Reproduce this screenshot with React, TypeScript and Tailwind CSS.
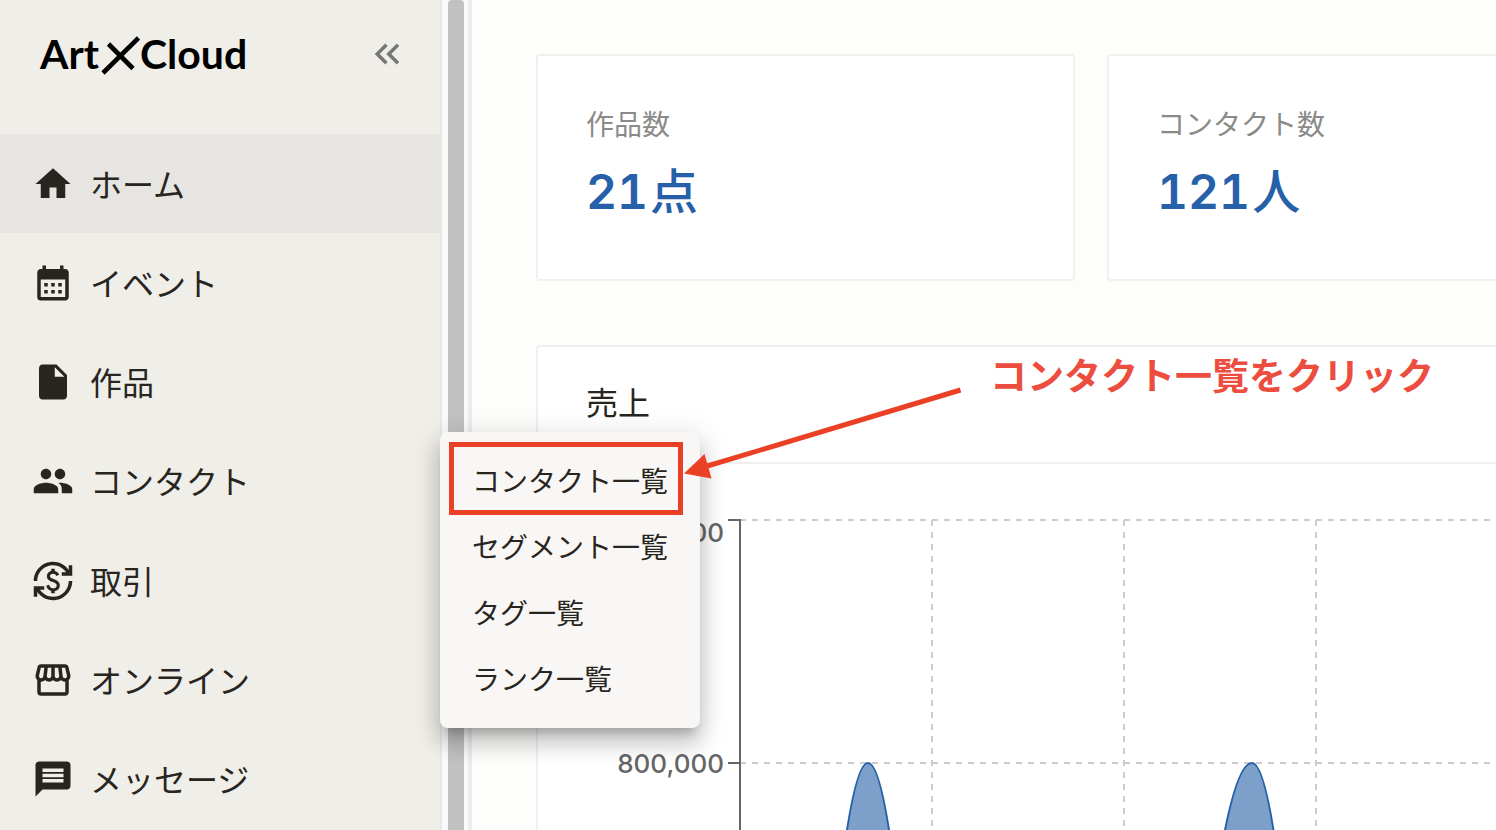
import React from 'react';
import {
  MdCalendarMonth,
  MdCurrencyExchange,
  MdHome,
  MdInsertDriveFile,
  MdKeyboardDoubleArrowLeft,
  MdMessage,
  MdOutlineStorefront,
  MdPeople,
} from 'react-icons/md';

const navItems = [
  { label: 'ホーム', Icon: MdHome, active: true },
  { label: 'イベント', Icon: MdCalendarMonth, active: false },
  { label: '作品', Icon: MdInsertDriveFile, active: false },
  { label: 'コンタクト', Icon: MdPeople, active: false },
  { label: '取引', Icon: MdCurrencyExchange, active: false },
  { label: 'オンライン', Icon: MdOutlineStorefront, active: false },
  { label: 'メッセージ', Icon: MdMessage, active: false },
];

const contactMenu = ['コンタクト一覧', 'セグメント一覧', 'タグ一覧', 'ランク一覧'];

const stats = [
  { label: '作品数', value: '21', unit: '点' },
  { label: 'コンタクト数', value: '121', unit: '人' },
];

function Logo() {
  return (
    <a href="#" className="flex items-center font-['Lato'] text-[41px] leading-none font-bold text-black">
      <span className="pb-0.5">Art</span>
      <svg width="41" height="42" viewBox="0 0 41 42" fill="none" stroke="currentColor" strokeWidth="4.6" aria-hidden="true">
        <path d="M4 39 39.500 4M9.500 10 34 34.500" />
      </svg>
      <span className="pb-0.5">Cloud</span>
    </a>
  );
}

function Sidebar() {
  return (
    <aside className="w-[440px] shrink-0 bg-[#efeee9] text-[#282520]">
      <div className="flex h-[134px] items-start justify-between pt-[33px] pr-8 pl-10">
        <Logo />
        <button type="button" aria-label="メニューを閉じる" className="text-[#777673]">
          <MdKeyboardDoubleArrowLeft size={42} />
        </button>
      </div>
      <nav className="grid h-[695px] grid-rows-7">
        {navItems.map(({ label, Icon, active }) => (
          <a
            key={label}
            href="#"
            className={`flex items-center gap-4 pl-8 text-[32px] leading-none ${active ? 'bg-[#e6e5e1]' : ''}`}
          >
            <Icon size={42} className="shrink-0" />
            <span className="pb-0.5">{label}</span>
          </a>
        ))}
      </nav>
    </aside>
  );
}

function ScrollTrack() {
  return (
    <div className="flex w-8 shrink-0 border-r-4 border-l-2 border-r-[#ededed] border-l-[#e8e8e8] bg-[#fafafa] pr-1 pl-1.5">
      <div className="w-full rounded-t bg-[#c1c1c1]" />
    </div>
  );
}

const gridRows = [
  { y: 56, labelY: 78, label: '1,000,000' },
  { y: 299, labelY: 309, label: '800,000' },
];
const gridColumns = [394, 586, 778, 970];

function SalesChart() {
  return (
    <svg className="block h-[600px] w-full" role="img" aria-label="売上">
      <g stroke="#ccc" strokeWidth="2" strokeDasharray="6 6">
        {gridRows.map((row) => (
          <line key={row.y} x1="202" x2="1100" y1={row.y} y2={row.y} />
        ))}
        {gridColumns.map((x) => (
          <line key={x} x1={x} x2={x} y1="56" y2="600" />
        ))}
      </g>
      <g fill="#2660a8" fillOpacity="0.6" stroke="#2660a8" strokeWidth="2">
        <path d="M302 418Q330 180 358 418" />
        <path d="M678 418Q696 299 714 299Q728.5 299 743 421" />
      </g>
      <g stroke="#666" strokeWidth="2">
        <line x1="202" x2="202" y1="55" y2="600" />
        {gridRows.map((row) => (
          <line key={row.y} x1="190" x2="202" y1={row.y} y2={row.y} />
        ))}
      </g>
      <g className="fill-[#666] font-['Inter'] text-[26px] font-medium" textAnchor="end">
        {gridRows.map((row) => (
          <text key={row.y} x="186" y={row.labelY}>
            {row.label}
          </text>
        ))}
      </g>
    </svg>
  );
}

function Dashboard() {
  return (
    <main className="min-w-0 flex-1 overflow-hidden bg-[#fdfdfb] pt-[54px] pl-16">
      <div className="-mr-[150px]">
        <div className="grid grid-cols-2 gap-8">
          {stats.map((stat) => (
            <section key={stat.label} className="h-[227px] rounded border-2 border-[#f0f0ef] bg-white px-12 pt-12">
              <h2 className="text-[28px] leading-[38px] text-[#8a8a88]">{stat.label}</h2>
              <p className="mt-3.5 flex items-center gap-0.5 text-[48px] leading-[64px] text-[#2660a8]">
                <span className="font-['Inter'] font-semibold tabular-nums">{stat.value}</span>
                <span className="pb-2 font-medium">{stat.unit}</span>
              </p>
            </section>
          ))}
        </div>
        <section className="mt-16 rounded border-2 border-[#f0f0ef] bg-white">
          <h2 className="flex h-[117px] items-center border-b-2 border-[#f0f0ef] px-12 pb-2 text-[32px] leading-none text-[#282520]">
            売上
          </h2>
          <SalesChart />
        </section>
      </div>
    </main>
  );
}

function ContactMenu() {
  return (
    <div className="absolute top-[432px] left-[440px] w-[260px] rounded-lg bg-[#f8f7f5] py-4 shadow-[0_10px_10px_-6px_rgba(0,0,0,0.2),0_16px_20px_2px_rgba(0,0,0,0.14),0_6px_28px_4px_rgba(0,0,0,0.12)]">
      {contactMenu.map((label) => (
        <a key={label} href="#" className="flex h-[66px] items-center pb-0.5 pl-8 text-[28px] leading-none whitespace-nowrap text-[#282520]">
          {label}
        </a>
      ))}
      <div className="pointer-events-none absolute top-[10px] left-[9px] h-[73px] w-[234px] border-5 border-[#ea4025]" />
    </div>
  );
}

function Callout() {
  return (
    <>
      <svg
        className="pointer-events-none absolute top-[380px] left-[680px]"
        width="290"
        height="110"
        viewBox="680 380 290 110"
        aria-hidden="true"
      >
        <path d="M960.500 390 704 467" stroke="#ea4025" strokeWidth="5" />
        <path d="M684 473.500 704.500 454 711.500 478.500Z" fill="#ea4025" />
      </svg>
      <p className="absolute top-[349px] left-[990px] text-[37px] leading-[50px] font-bold whitespace-nowrap text-[#ec4d3e]">
        コンタクト一覧をクリック
      </p>
    </>
  );
}

export default function App() {
  return (
    <div className="relative flex h-screen overflow-hidden font-['Noto_Sans_CJK_JP',sans-serif]">
      <Sidebar />
      <ScrollTrack />
      <Dashboard />
      <ContactMenu />
      <Callout />
    </div>
  );
}
